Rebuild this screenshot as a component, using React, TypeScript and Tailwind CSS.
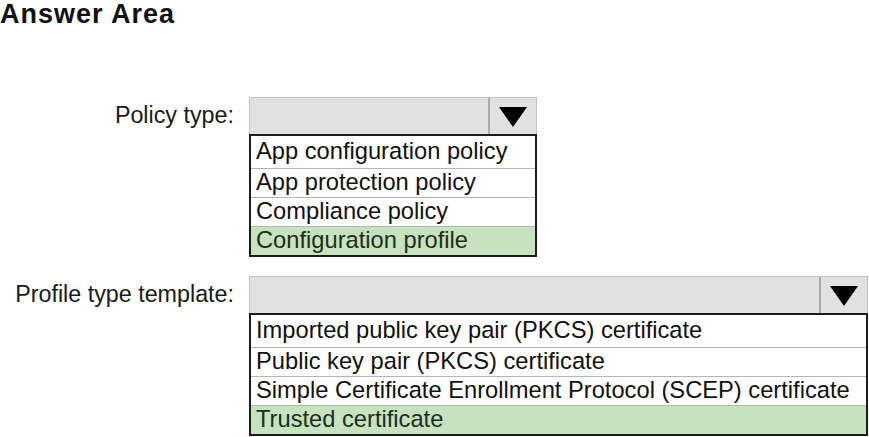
const font = { fontFamily: '"Liberation Sans", Arial, sans-serif' };

interface DropdownProps {
  label: string;
  width: string;
  items: string[];
  selected: number;
}

function ArrowDown() {
  return (
    <svg width="28" height="20" viewBox="0 0 28 20">
      <polygon points="0,0 28,0 14,20" fill="#000" />
    </svg>
  );
}

function Dropdown({ label, width, items, selected }: DropdownProps) {
  return (
    <div className="flex items-start">
      <div className="w-[249px] h-[37px] flex items-center justify-end pr-[15px] text-[23.3px] text-[#1a1a1a] leading-none">
        {label}
      </div>
      <div className={`flex flex-col ${width}`}>
        <div className="flex h-[37px] bg-[#e1e1e1] border border-[#c4c4c4] border-b-0">
          <div className="flex-1" />
          <div className="w-[48px] border-l-2 border-[#a9a9a9] flex items-center justify-center pt-[2px]">
            <ArrowDown />
          </div>
        </div>
        <div className="border-2 border-[#1c1c1c] bg-white">
          {items.map((item, i) => (
            <div
              key={item}
              className={`flex items-center px-[5px] text-[23.7px] leading-none ${
                i === 0 ? 'h-[32px]' : 'h-[29px] border-t border-[#b5b5b5]'
              } ${i === selected ? 'bg-[#c6e2bf] text-[#1e2e1e]' : 'text-[#111]'}`}
            >
              {item}
            </div>
          ))}
        </div>
      </div>
    </div>
  );
}

export default function App() {
  return (
    <div className="w-[869px] h-[437px] bg-white overflow-hidden" style={font}>
      <h1 className="text-[27px] font-bold leading-none text-[#111] tracking-[1px] pt-[1px]">
        Answer Area
      </h1>

      <div className="mt-[69px] flex flex-col gap-[19px]">
        <Dropdown
          label="Policy type:"
          width="w-[288px]"
          selected={3}
          items={[
            'App configuration policy',
            'App protection policy',
            'Compliance policy',
            'Configuration profile',
          ]}
        />
        <Dropdown
          label="Profile type template:"
          width="w-[619px]"
          selected={3}
          items={[
            'Imported public key pair (PKCS) certificate',
            'Public key pair (PKCS) certificate',
            'Simple Certificate Enrollment Protocol (SCEP) certificate',
            'Trusted certificate',
          ]}
        />
      </div>
    </div>
  );
}
